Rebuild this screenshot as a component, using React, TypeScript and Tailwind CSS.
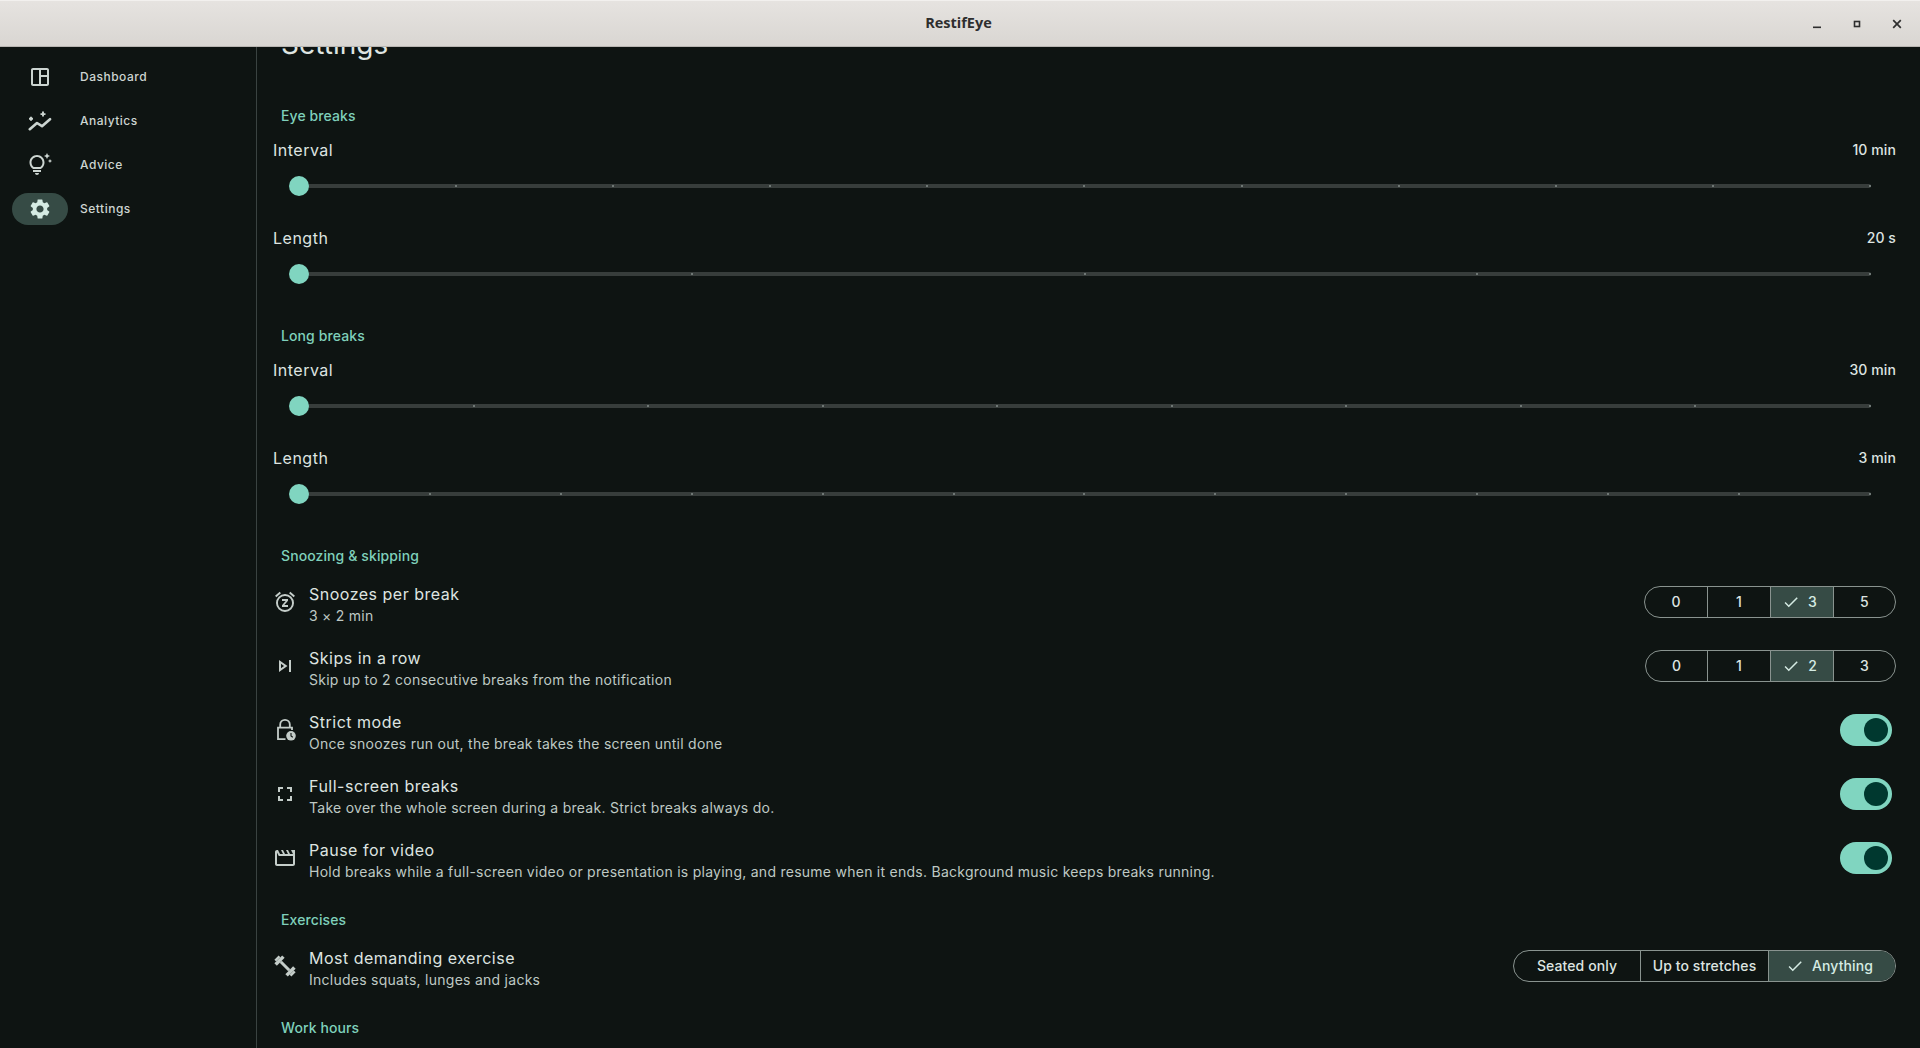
import React, { FC, ReactNode } from 'react';
import {
  MdOutlineSpaceDashboard,
  MdOutlineTipsAndUpdates,
  MdSettings,
  MdOutlineSnooze,
  MdOutlineSkipNext,
  MdOutlineFullscreen,
  MdOutlineMovie,
  MdCheck,
} from 'react-icons/md';

const AnalyticsIcon: FC = () => (
  <svg viewBox="0 0 24 24" width="24" height="24" fill="none" stroke="currentColor">
    <path d="M1.8 20.2 9 14l5 3.2 8-7" strokeWidth="2.6" strokeLinecap="round" strokeLinejoin="round" />
    <path d="M3 7.8v4M1 9.8h4M15 2.6v5M12.5 5.1h5" strokeWidth="1.9" />
  </svg>
);

const LockClockIcon: FC = () => (
  <svg viewBox="0 0 24 24" width="24" height="24" fill="none">
    <path d="M12.5 21.2H5V9.6h14V12M7.2 9.6V6.6a4.8 4.8 0 0 1 9.6 0v3" stroke="currentColor" strokeWidth="1.8" />
    <circle cx="18" cy="17.8" r="4.8" fill="currentColor" />
    <path d="M18 15v3l1.8 1.2" stroke="#0e1412" strokeWidth="1.1" />
  </svg>
);

const DumbbellIcon: FC = () => (
  <svg viewBox="0 0 24 24" width="24" height="24" fill="currentColor">
    <g transform="rotate(45 12 12)">
      <rect x="0" y="9" width="2.5" height="6" />
      <rect x="2.5" y="6.5" width="3.5" height="11" />
      <rect x="6" y="10.5" width="12" height="3" />
      <rect x="18" y="6.5" width="3.5" height="11" />
      <rect x="21.5" y="9" width="2.5" height="6" />
    </g>
  </svg>
);

const NAV_ITEMS = [
  { label: 'Dashboard', icon: <MdOutlineSpaceDashboard size={24} /> },
  { label: 'Analytics', icon: <AnalyticsIcon /> },
  { label: 'Advice', icon: <MdOutlineTipsAndUpdates size={24} /> },
  { label: 'Settings', icon: <MdSettings size={24} />, active: true },
];

const TitleBar: FC = () => (
  <header className="h-[47px] shrink-0 flex items-center bg-gradient-to-b from-[#e6e3e0] to-[#d9d6d2] border-t border-t-[#f2f0ee] border-b border-b-[#b8b5b1]">
    <div className="flex-1" />
    <span className="pb-0.5 text-[14.5px] font-bold text-[#2e2e2e] font-['Open_Sans',sans-serif]">RestifEye</span>
    <div className="flex-1 flex justify-end pr-[3px] text-[#2e2e2e]">
      <button className="w-10 h-6 flex items-center justify-center">
        <svg viewBox="0 0 12 12" width="12" height="12"><rect x="2" y="8.5" width="8" height="1.6" fill="currentColor" /></svg>
      </button>
      <button className="w-10 h-6 flex items-center justify-center">
        <svg viewBox="0 0 12 12" width="12" height="12"><rect x="3.5" y="3.5" width="5" height="5" fill="none" stroke="currentColor" strokeWidth="1.6" /></svg>
      </button>
      <button className="w-10 h-6 flex items-center justify-center">
        <svg viewBox="0 0 12 12" width="12" height="12"><path d="M2.2 2.2l7.6 7.6M9.8 2.2l-7.6 7.6" stroke="currentColor" strokeWidth="1.7" /></svg>
      </button>
    </div>
  </header>
);

const Sidebar: FC = () => (
  <aside className="w-[257px] shrink-0 border-r border-[#3a4341] pt-2">
    {NAV_ITEMS.map((item) => (
      <div key={item.label} className="h-11 flex items-center pl-3">
        <div className={`w-14 h-8 rounded-full flex items-center justify-center ${item.active ? 'bg-[#364b45] text-[#d5ebe3]' : 'text-[#ccd5d1]'}`}>
          {item.icon}
        </div>
        <span className="ml-3 text-xs font-medium tracking-[0.5px] text-[#cdd5d1]">{item.label}</span>
      </div>
    ))}
  </aside>
);

const SectionLabel: FC<{ children: ReactNode; className?: string }> = ({ children, className }) => (
  <h2 className={`h-5 pl-2 text-sm leading-5 font-medium tracking-[0.1px] text-[#7fd0bb] ${className ?? ''}`}>{children}</h2>
);

const Slider: FC<{ label: string; value: string; divisions: number; className?: string }> = ({ label, value, divisions, className }) => (
  <div className={className}>
    <div className="h-6 flex items-center justify-between">
      <span className="text-base tracking-[0.5px] text-[#dee4e1]">{label}</span>
      <span className="text-sm font-medium tracking-[0.1px] text-[#dee4e1]">{value}</span>
    </div>
    <div className="h-12 flex items-center px-[25px]">
      <div className="relative flex-1 h-1 rounded-full bg-[#373d3b] flex items-center justify-between">
        {Array.from({ length: divisions + 1 }).map((_, i) => (
          <span key={i} className="w-0.5 h-0.5 bg-[#6f7875]" />
        ))}
        <div className="absolute left-[-9px] top-[-8px] w-5 h-5 rounded-full bg-[#80d5c0]" />
      </div>
    </div>
  </div>
);

const Segmented: FC<{ options: string[]; selected: string; widthClass: string; gridClass: string }> = ({ options, selected, widthClass, gridClass }) => (
  <div className={`h-8 grid ${gridClass} ${widthClass} rounded-full border border-[#89938f] overflow-hidden text-sm font-medium tracking-[0.1px] text-[#dee4e1]`}>
    {options.map((opt, i) => (
      <div
        key={opt}
        className={`flex items-center justify-center gap-2 ${i > 0 ? 'border-l border-[#89938f]' : ''} ${opt === selected ? 'bg-[#364b45] text-[#d5ebe3] pr-[5px]' : ''}`}
      >
        {opt === selected && <MdCheck size={18} />}
        {opt}
      </div>
    ))}
  </div>
);

const Switch: FC = () => (
  <div className="w-[52px] h-8 mr-1 rounded-full bg-[#80d5c0] flex items-center justify-end pr-1">
    <div className="w-6 h-6 rounded-full bg-[#00382f]" />
  </div>
);

const Row: FC<{ icon: ReactNode; title: string; desc: string; children: ReactNode }> = ({ icon, title, desc, children }) => (
  <div className="h-16 flex items-center">
    <div className="w-6 h-6 mr-3 shrink-0 flex items-center justify-center text-[#c4cdc9]">{icon}</div>
    <div className="flex-1 pt-1">
      <div className="text-base leading-6 tracking-[0.5px] text-[#dee4e1]">{title}</div>
      <div className="text-sm leading-5 tracking-[0.26px] text-[#bfc9c4]">{desc}</div>
    </div>
    {children}
  </div>
);

export default function App() {
  return (
    <div className="h-screen flex flex-col overflow-hidden bg-[#0e1412] font-['Inter',sans-serif]">
      <TitleBar />
      <div className="flex-1 min-h-0 flex">
        <Sidebar />
        <main className="flex-1 min-w-0 overflow-hidden pl-4 pr-6">
          <h1 className="-mt-[21px] ml-2 h-9 text-[28px] leading-9 text-[#dee4e1]">Settings</h1>

          <SectionLabel className="mt-[44px]">Eye breaks</SectionLabel>
          <Slider className="mt-3" label="Interval" value="10 min" divisions={10} />
          <Slider className="mt-4" label="Length" value="20 s" divisions={4} />

          <SectionLabel className="mt-7">Long breaks</SectionLabel>
          <Slider className="mt-3" label="Interval" value="30 min" divisions={9} />
          <Slider className="mt-4" label="Length" value="3 min" divisions={12} />

          <SectionLabel className="mt-7">Snoozing &amp; skipping</SectionLabel>
          <div className="mt-1">
            <Row icon={<MdOutlineSnooze size={24} />} title="Snoozes per break" desc="3 × 2 min">
              <Segmented options={['0', '1', '3', '5']} selected="3" widthClass="w-[252px]" gridClass="grid-cols-[62px_63px_63px_1fr]" />
            </Row>
            <Row icon={<MdOutlineSkipNext size={24} />} title="Skips in a row" desc="Skip up to 2 consecutive breaks from the notification">
              <Segmented options={['0', '1', '2', '3']} selected="2" widthClass="w-[251px]" gridClass="grid-cols-[61px_63px_63px_1fr]" />
            </Row>
            <Row icon={<LockClockIcon />} title="Strict mode" desc="Once snoozes run out, the break takes the screen until done">
              <Switch />
            </Row>
            <Row icon={<MdOutlineFullscreen size={24} />} title="Full-screen breaks" desc="Take over the whole screen during a break. Strict breaks always do.">
              <Switch />
            </Row>
            <Row icon={<MdOutlineMovie size={24} />} title="Pause for video" desc="Hold breaks while a full-screen video or presentation is playing, and resume when it ends. Background music keeps breaks running.">
              <Switch />
            </Row>
          </div>

          <SectionLabel className="mt-5">Exercises</SectionLabel>
          <div className="mt-1">
            <Row icon={<DumbbellIcon />} title="Most demanding exercise" desc="Includes squats, lunges and jacks">
              <Segmented options={['Seated only', 'Up to stretches', 'Anything']} selected="Anything" widthClass="w-[383px]" gridClass="grid-cols-[126px_128px_1fr]" />
            </Row>
          </div>

          <SectionLabel className="mt-5">Work hours</SectionLabel>
        </main>
      </div>
    </div>
  );
}
